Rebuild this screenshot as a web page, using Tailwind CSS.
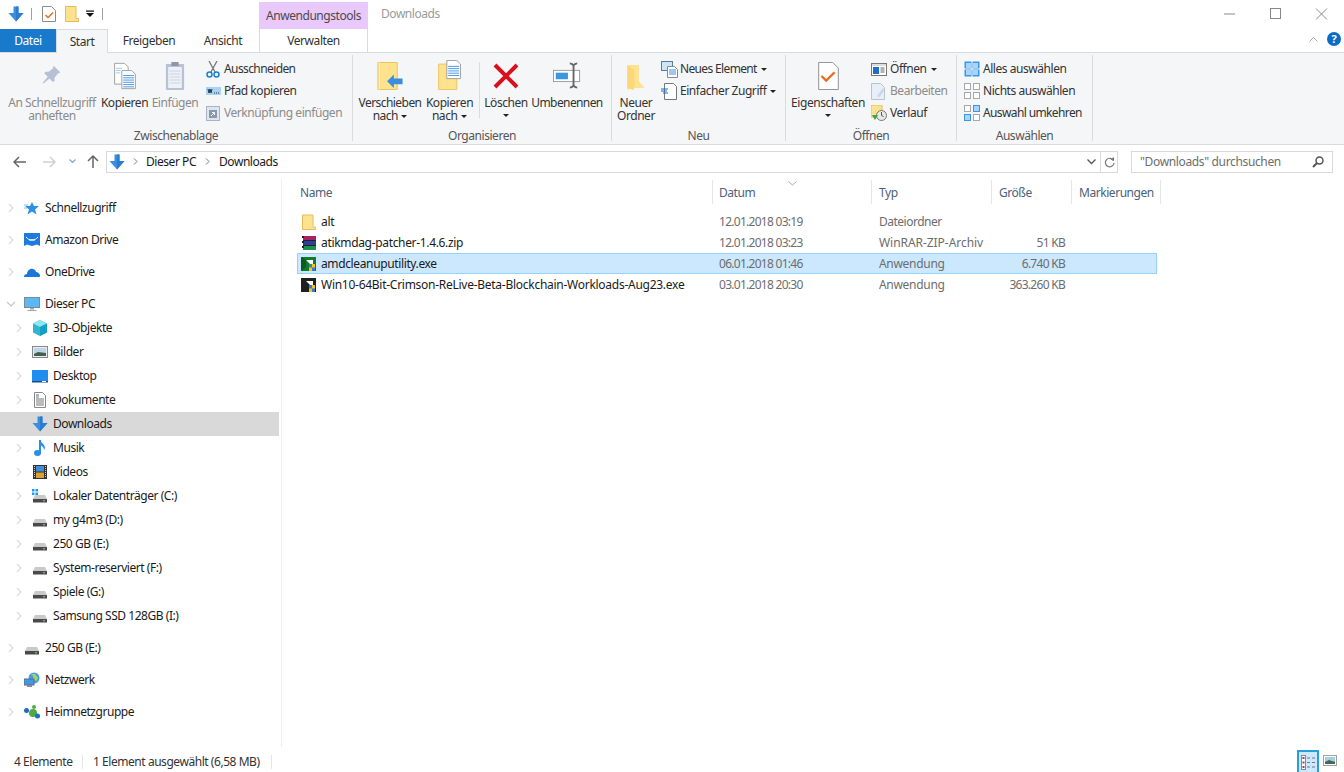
<!DOCTYPE html>
<html lang="de"><head><meta charset="utf-8"><title>Downloads</title>
<script src="https://cdn.jsdelivr.net/npm/@tailwindcss/browser@4"></script></head>
<body class="bg-white overflow-hidden">
<svg width="0" height="0" class="absolute">
<defs>
<symbol id="dl" viewBox="0 0 16 16"><path d="M5.500 0.500h5V7h5L8 15.500 0.500 7h5z" fill="#3a8ee0"/><path d="M8 0.500h2.500V7h5L8 15.500z" fill="#2b7bd0"/></symbol>
<symbol id="chev" viewBox="0 0 8 10"><path d="M2 1l4 4-4 4" fill="none" stroke="#dcdcdc" stroke-width="1.200"/></symbol>
<symbol id="drive" viewBox="0 0 16 16"><path d="M3 7h10l2 4H1z" fill="#c9c9c9"/><rect x="1" y="11" width="14" height="3.500" fill="#4a4a4a"/><rect x="11" y="12.300" width="2" height="1" fill="#5fe05f"/></symbol>
<symbol id="folder" viewBox="0 0 16 16"><path d="M1.500 1h10.500v12h2.500v2.500H1.500z" fill="#ffe28e" stroke="#e3bd5a"/></symbol>
</defs>
</svg>
<div class="flex flex-col h-[772px] w-[1344px] overflow-hidden text-[12px] leading-4 text-[#1a1a1a] font-['Noto_Sans','Liberation_Sans',sans-serif] tracking-[-0.45px]">

<!-- title bar -->
<div class="flex h-[29px] items-start relative">
  <div class="flex items-center h-[27px] pl-[8px]">
    <svg class="w-[16px] h-[16px]"><use href="#dl"/></svg>
    <div class="w-px h-[12px] bg-[#a0a0a0] ml-[7px]"></div>
    <svg class="w-[14px] h-[16px] ml-[10px]" viewBox="0 0 14 16"><path d="M.5.500h9l4 4v11H.5z" fill="#fff" stroke="#8a8a8a"/><path d="M3.500 9l2.500 2.500 5-5" fill="none" stroke="#ee6a1f" stroke-width="1.500"/></svg>
    <svg class="w-[14px] h-[16px] ml-[9px]" viewBox="0 0 14 16"><path d="M.5.500h10.500v12h2.500v3H.5z" fill="#ffe28e" stroke="#e3bd5a"/></svg>
    <svg class="w-[8px] h-[8px] ml-[7px]" viewBox="0 0 8 8"><path d="M0 .5h8v1.200H0zM0 3h8L4 7z" fill="#111"/></svg>
    <div class="w-px h-[12px] bg-[#a0a0a0] ml-[8px]"></div>
  </div>
  <div class="ml-[156px] mt-[2px] w-[109px] h-[27px] bg-[#e9c9fb] text-center leading-[28px] text-[#4a4a4a]">Anwendungstools</div>
  <div class="ml-[13px] mt-[6px] text-[#9a9a9a]">Downloads</div>
  <div class="ml-auto flex items-center h-[27px]">
    <svg class="w-[46px] h-[12px]" viewBox="0 0 46 12"><path d="M18 6h11" stroke="#888"/></svg>
    <svg class="w-[46px] h-[12px]" viewBox="0 0 46 12"><rect x="18.500" y=".5" width="10" height="10" fill="none" stroke="#888"/></svg>
    <svg class="w-[46px] h-[12px]" viewBox="0 0 46 12"><path d="M18 .5l11 11M29 .5l-11 11" stroke="#888"/></svg>
  </div>
</div>

<!-- tabs -->
<div class="flex h-[24px] relative">
  <div class="w-[56px] h-[23px] bg-[#1979ca] text-white text-center leading-[24px]">Datei</div>
  <div class="w-[52px] h-[24px] bg-[#f5f6f7] border-x border-t border-[#dadbdc] text-center leading-[24px] z-10 text-[#333]">Start</div>
  <div class="w-[66px] text-center leading-[24px] h-[23px] text-[#333] ml-[8px]">Freigeben</div>
  <div class="w-[56px] text-center leading-[24px] h-[23px] text-[#333] ml-[13px]">Ansicht</div>
  <div class="ml-[8px] w-[109px] h-[23px] text-center leading-[24px] border-x border-[#dadbdc] text-[#333]">Verwalten</div>
  <div class="ml-auto flex items-center gap-[9px] pr-[3px] pb-[5px]">
    <svg class="w-[9px] h-[6px]" viewBox="0 0 9 6"><path d="M.5 5.500l4-4 4 4" fill="none" stroke="#a6a6a6"/></svg>
    <div class="w-[14px] h-[14px] rounded-full bg-[#0c6cc4] text-white text-center text-[11px] leading-[14px] font-bold">?</div>
  </div>
</div>

<!-- ribbon -->
<div class="flex bg-[#f5f6f7] border-y border-[#dadbdc] -mt-px pt-[2px] box-content h-[89px] text-[#333]">
  <!-- Zwischenablage -->
  <div class="w-[353px] flex flex-col border-r border-[#dadbdc] mb-[3px]">
    <div class="flex flex-1 items-start">
      <div class="w-[96px] ml-[4px] flex flex-col items-center text-[#8b8b8b] text-center">
        <svg class="w-[22px] h-[22px] mt-[10px] mb-[9px]" viewBox="0 3 26 26"><path d="M15 4l8 8-3 1-4 5 0 4-2 1-4-4-7 6-1-1 6-7-4-4 1-2 4 0 5-4z" fill="#b6c2d4"/></svg>
        <div class="leading-[13px]">An Schnellzugriff<br>anheften</div>
      </div>
      <div class="w-[47px] ml-px flex flex-col items-center">
        <svg class="w-[24px] h-[28px] mt-[7px] mb-[6px]" viewBox="0 0 26 31"><path d="M1.500 1.500h11l4 4v19h-15z" fill="#fff" stroke="#999"/><path d="M9.500 9.500h11l4 4v16h-15z" fill="#fff" stroke="#999"/><path d="M11 15h12M11 17.500h12M11 20h12M11 22.500h12M11 25h12M11 27.500h12" stroke="#3b8fe3"/><path d="M3 7h7M3 9.500h5M3 12h5" stroke="#9cc5ee"/></svg>
        <div class="leading-[13px]">Kopieren</div>
      </div>
      <div class="w-[48px] ml-[3px] flex flex-col items-center text-[#8b8b8b]">
        <svg class="w-[20px] h-[30px] mt-[6px] mb-[5px]" viewBox="0 0 22 30" preserveAspectRatio="none"><rect x="1" y="3" width="20" height="26" rx="1" fill="#b7c2d3"/><rect x="3.500" y="6" width="15" height="21" fill="#eef2f8"/><path d="M5 10h12M5 13h12M5 16h12M5 19h12M5 22h12" stroke="#c9d3e2"/><rect x="7" y="1" width="8" height="4" fill="#8d97a8"/></svg>
        <div class="leading-[13px]">Einfügen</div>
      </div>
      <div class="ml-[7px] flex flex-col">
        <div class="flex items-center h-[22px] mt-[3px] tracking-[-0.6px]"><svg class="w-[14px] h-[17px] mr-[4px]" viewBox="0 0 14 17"><path d="M3 0l6 11M11 0L5 11" stroke="#777" stroke-width="1.300"/><circle cx="3.500" cy="13.500" r="2.500" fill="none" stroke="#1f7fd0" stroke-width="1.500"/><circle cx="10.500" cy="13.500" r="2.500" fill="none" stroke="#1f7fd0" stroke-width="1.500"/></svg>Ausschneiden</div>
        <div class="flex items-center h-[22px]"><svg class="w-[15px] h-[8px] mr-[3px]" viewBox="0 0 15 8"><rect width="15" height="8" fill="#a9d3f5"/><path d="M2 2l1 4 1-4 1 4 1-4M8 6h1M10 6h1M12 6h1" stroke="#234" fill="none"/></svg>Pfad kopieren</div>
        <div class="flex items-center h-[22px] text-[#8b8b8b]"><svg class="w-[14px] h-[16px] mr-[4px]" viewBox="0 0 14 16"><rect x=".5" y="1.500" width="13" height="14" fill="#dfe5ee" stroke="#a8b3c4"/><rect x="3" y="5" width="8" height="8" fill="#8898b0"/><path d="M5 11l3-3M6 7.500h2.500V10" stroke="#fff" fill="none"/></svg>Verknüpfung einfügen</div>
      </div>
    </div>
    <div class="h-[16px] text-center text-[#555] leading-[22px]">Zwischenablage</div>
  </div>
  <!-- Organisieren -->
  <div class="w-[259px] flex flex-col border-r border-[#dadbdc] mb-[3px]">
    <div class="flex flex-1 items-start">
      <div class="w-[68px] ml-[3px] flex flex-col items-center text-center tracking-[-0.55px]">
        <svg class="w-[26px] h-[28px] mt-[7px] mb-[6px]" viewBox="0 0 26 29"><path d="M.5.500h20v28H.5z" fill="#ffe28e" stroke="#eac25a"/><path d="M2 .5v28" stroke="#fff3c8"/><path d="M10 20l7-7v4h9v6h-9v4z" fill="#3a8ee0"/></svg>
        <div class="leading-[13px]">Verschieben<br>nach <span class="inline-block align-middle w-0 h-0 border-x-[3px] border-x-transparent border-t-[3px] border-t-[#222] ml-px"></span></div>
      </div>
      <div class="w-[47px] ml-[2px] flex flex-col items-center text-center">
        <svg class="w-[26px] h-[30px] mt-[5px] mb-[6px]" viewBox="0 0 26 33"><path d="M.5 4.500h20v28H.5z" fill="#ffe28e" stroke="#eac25a"/><path d="M9.500.5h11l4 4v16h-15z" fill="#fff" stroke="#999"/><path d="M11 7h12M11 9.500h12M11 12h12M11 14.500h12M11 17h12" stroke="#3b8fe3"/></svg>
        <div class="leading-[13px]">Kopieren<br>nach <span class="inline-block align-middle w-0 h-0 border-x-[3px] border-x-transparent border-t-[3px] border-t-[#222] ml-px"></span></div>
      </div>
      <div class="w-px h-[56px] bg-[#dadbdc] ml-[6px] mt-[7px]"></div>
      <div class="w-[48px] ml-[2px] flex flex-col items-center">
        <svg class="w-[26px] h-[26px] mt-[8px] mb-[7px]" viewBox="0 0 26 26"><path d="M2 2l22 22M24 2L2 24" stroke="#d90f1d" stroke-width="4"/></svg>
        <div class="leading-[13px]">Löschen</div>
        <span class="block w-0 h-0 border-x-[3px] border-x-transparent border-t-[3px] border-t-[#222] mt-[5px]"></span>
      </div>
      <div class="w-[72px] ml-[1px] flex flex-col items-center tracking-[-0.6px]">
        <svg class="w-[28px] h-[27px] mt-[7px] mb-[7px]" viewBox="0 0 30 28"><rect x=".5" y="8.500" width="28" height="12" fill="#fff" stroke="#999"/><rect x="3" y="11" width="13" height="7" fill="#3a97e6"/><path d="M18 1c2 0 3 1 4 2 1-1 2-2 4-2M22 3v22M18 27c2 0 3-1 4-2 1 1 2 2 4 2" fill="none" stroke="#666" stroke-width="2"/></svg>
        <div class="leading-[13px]">Umbenennen</div>
      </div>
    </div>
    <div class="h-[16px] text-center text-[#555] leading-[22px]">Organisieren</div>
  </div>
  <!-- Neu -->
  <div class="w-[174px] flex flex-col border-r border-[#dadbdc] mb-[3px]">
    <div class="flex flex-1 items-start">
      <div class="w-[48px] flex flex-col items-center text-center">
        <svg class="w-[20px] h-[27px] mt-[9px] mb-[5px]" viewBox="0 0 20 28"><path d="M1 1h12v17l6 7H8l-7 2z" fill="#ffe28e"/><path d="M1 1l7 5v21l-7-2z" fill="#fbd777"/></svg>
        <div class="leading-[13px]">Neuer<br>Ordner</div>
      </div>
      <div class="ml-px flex flex-col">
        <div class="flex items-center h-[22px] mt-[3px] tracking-[-0.65px]"><svg class="w-[17px] h-[17px] mr-[2px]" viewBox="0 0 17 17"><rect x=".5" y=".5" width="11" height="9" fill="#cfe4f7" stroke="#5a7a9a"/><path d="M6.500 5.500h7l3 3v8h-10z" fill="#fff" stroke="#888"/><path d="M8 9h7M8 11h7M8 13h7" stroke="#3b8fe3"/></svg>Neues Element <span class="inline-block w-0 h-0 border-x-[3px] border-x-transparent border-t-[3px] border-t-[#222] ml-[4px]"></span></div>
        <div class="flex items-center h-[22px]"><svg class="w-[16px] h-[17px] mr-[3px]" viewBox="0 0 16 17"><path d="M3.500.5h9l3 3v13h-12z" fill="#fff" stroke="#777"/><path d="M0 6h7M0 8h6M2 10h5" stroke="#1f6fb8"/></svg>Einfacher Zugriff <span class="inline-block w-0 h-0 border-x-[3px] border-x-transparent border-t-[3px] border-t-[#222] ml-[4px]"></span></div>
      </div>
    </div>
    <div class="h-[16px] text-center text-[#555] leading-[22px]">Neu</div>
  </div>
  <!-- Öffnen -->
  <div class="w-[171px] flex flex-col border-r border-[#dadbdc] mb-[3px]">
    <div class="flex flex-1 items-start">
      <div class="w-[78px] ml-[3px] flex flex-col items-center">
        <svg class="w-[21px] h-[28px] mt-[7px] mb-[6px]" viewBox="0 0 22 30"><path d="M.5.500h15l6 6v23H.5z" fill="#fff" stroke="#8a8a8a"/><path d="M3.500 15l5 5 9-9" fill="none" stroke="#ee6a1f" stroke-width="2.500"/></svg>
        <div class="leading-[13px]">Eigenschaften</div>
        <span class="block w-0 h-0 border-x-[3px] border-x-transparent border-t-[3px] border-t-[#222] mt-[5px]"></span>
      </div>
      <div class="ml-[4px] flex flex-col">
        <div class="flex items-center h-[22px] mt-[3px]"><svg class="w-[16px] h-[13px] mr-[3px]" viewBox="0 0 16 13"><rect x=".5" y=".5" width="15" height="12" fill="#fff" stroke="#777"/><rect x="2" y="4" width="6" height="7" fill="#1f6fc8"/><path d="M9.500 5h4M9.500 7h4M9.500 9h4" stroke="#666"/><path d="M1 2h14" stroke="#bbb"/></svg>Öffnen <span class="inline-block w-0 h-0 border-x-[3px] border-x-transparent border-t-[3px] border-t-[#222] ml-[4px]"></span></div>
        <div class="flex items-center h-[22px] text-[#8b8b8b]"><svg class="w-[15px] h-[17px] mr-[4px]" viewBox="0 0 15 17"><path d="M.5.500h9l4 4v12H.5z" fill="#e9eff8" stroke="#b5c3d8"/><path d="M6 13l6-8 2 1.500-6 8z" fill="#c9d6e8"/></svg>Bearbeiten</div>
        <div class="flex items-center h-[22px]"><svg class="w-[16px] h-[16px] mr-[3px]" viewBox="0 0 16 16"><path d="M0 0h11v12H0z" fill="#ffe28e" stroke="#e3bd5a"/><circle cx="10.500" cy="10.500" r="5" fill="#e8e8e8" stroke="#777"/><path d="M10.500 7v3.500l2 1" stroke="#555" fill="none"/><path d="M1 10l3 5 3-5z" fill="#3aa845"/></svg>Verlauf</div>
      </div>
    </div>
    <div class="h-[16px] text-center text-[#555] leading-[22px]">Öffnen</div>
  </div>
  <!-- Auswählen -->
  <div class="w-[136px] flex flex-col border-r border-[#dadbdc] mb-[3px]">
    <div class="flex flex-col flex-1 pl-[7px]">
      <div class="flex items-center h-[22px] mt-[3px]"><svg class="w-[16px] h-[16px] mr-[3px]" viewBox="0 0 16 16"><rect x=".5" y=".5" width="15" height="15" fill="#3a97e6"/><path d="M8 0v16M0 8h16" stroke="#fff"/><rect x="2" y="2" width="5" height="5" fill="#a8d4f7"/><rect x="9" y="2" width="5" height="5" fill="#a8d4f7"/><rect x="2" y="9" width="5" height="5" fill="#a8d4f7"/><rect x="9" y="9" width="5" height="5" fill="#a8d4f7"/></svg>Alles auswählen</div>
      <div class="flex items-center h-[22px]"><svg class="w-[16px] h-[16px] mr-[3px]" viewBox="0 0 16 16" fill="#fff" stroke="#a8a8a8"><rect x=".5" y=".5" width="6" height="6"/><rect x="9.500" y=".5" width="6" height="6"/><rect x=".5" y="9.500" width="6" height="6"/><rect x="9.500" y="9.500" width="6" height="6"/></svg>Nichts auswählen</div>
      <div class="flex items-center h-[22px] tracking-[-0.62px]"><svg class="w-[16px] h-[16px] mr-[3px]" viewBox="0 0 16 16" stroke="#a8a8a8"><rect x=".5" y=".5" width="6" height="6" fill="#fff"/><rect x="9.500" y=".5" width="6" height="6" fill="#a8d4f7" stroke="#3a97e6"/><rect x=".5" y="9.500" width="6" height="6" fill="#a8d4f7" stroke="#3a97e6"/><rect x="9.500" y="9.500" width="6" height="6" fill="#fff"/></svg>Auswahl umkehren</div>
    </div>
    <div class="h-[16px] text-center text-[#555] leading-[22px]">Auswählen</div>
  </div>
</div>

<!-- address row -->
<div class="flex items-center h-[35px] mt-[-1px] shrink-0">
  <svg class="w-[13px] h-[12px] ml-[13px]" viewBox="0 0 13 12"><path d="M6 1L1 6l5 5M1 6h12" fill="none" stroke="#666" stroke-width="1.500"/></svg>
  <svg class="w-[13px] h-[12px] ml-[17px]" viewBox="0 0 13 12"><path d="M7 1l5 5-5 5M12 6H0" fill="none" stroke="#d0d0d0" stroke-width="1.500"/></svg>
  <svg class="w-[7px] h-[5px] ml-[13px]" viewBox="0 0 7 5"><path d="M.5.500l3 3 3-3" fill="none" stroke="#7aa3cc" stroke-width="1.200"/></svg>
  <svg class="w-[12px] h-[13px] ml-[11px]" viewBox="0 0 12 13"><path d="M1 6l5-5 5 5M6 1v12" fill="none" stroke="#666" stroke-width="1.500"/></svg>
  <div class="ml-[7px] w-[1012px] h-[22px] border border-[#d9d9d9] flex items-center">
    <svg class="w-[16px] h-[16px] ml-[2px]"><use href="#dl"/></svg>
    <svg class="w-[5px] h-[7px] ml-[8px]" viewBox="0 0 5 7"><path d="M1 .5l3 3-3 3" fill="none" stroke="#777"/></svg>
    <span class="ml-[8px]">Dieser PC</span>
    <svg class="w-[5px] h-[7px] ml-[9px]" viewBox="0 0 5 7"><path d="M1 .5l3 3-3 3" fill="none" stroke="#777"/></svg>
    <span class="ml-[9px]">Downloads</span>
    <svg class="w-[9px] h-[6px] ml-auto mr-[4px]" viewBox="0 0 9 6"><path d="M.5.500l4 4 4-4" fill="none" stroke="#555" stroke-width="1.300"/></svg>
    <div class="w-[17px] h-full border-l border-[#d9d9d9] flex items-center justify-center"><svg class="w-[11px] h-[12px]" viewBox="0 0 11 12"><path d="M9.500 4.500A4.300 4.300 0 1 0 10 7" fill="none" stroke="#777" stroke-width="1.200"/><path d="M6.500 3.500L10 1v4z" fill="#777"/></svg></div>
  </div>
  <div class="ml-[13px] w-[202px] h-[22px] border border-[#d9d9d9] flex items-center pl-[8px] text-[#6d6d6d] tracking-[-0.35px]">"Downloads" durchsuchen
    <svg class="w-[12px] h-[12px] ml-auto mr-[8px]" viewBox="0 0 12 12"><circle cx="7.500" cy="4.500" r="3.500" fill="none" stroke="#555" stroke-width="1.500"/><path d="M5 7l-4 4" stroke="#555" stroke-width="2"/></svg></div>
</div>

<!-- main -->
<div class="flex flex-1 min-h-0">
  <!-- nav -->
  <nav class="w-[282px] border-r border-[#efefef] mb-[3px] pt-[17px] shrink-0">
    <div class="flex items-center h-[24px] mb-[8px]"><svg class="w-[8px] h-[10px] ml-[7px]"><use href="#chev"/></svg><svg class="w-[16px] h-[16px] ml-[9px]" viewBox="0 0 16 16"><path d="M8 2l2 4 5 0-4 3.500 1.500 5L8 11.500 3.500 14.500 5 9.500 1 6h5z" fill="#2a8fe6"/><path d="M0 5h4M0 8h3" stroke="#7bbcf0"/></svg><span class="ml-[5px]">Schnellzugriff</span></div>
    <div class="flex items-center h-[24px] mb-[8px]"><svg class="w-[8px] h-[10px] ml-[7px]"><use href="#chev"/></svg><svg class="w-[16px] h-[16px] ml-[9px]" viewBox="0 0 16 16"><path d="M0 1h16v13l-3-1.500-5 1.500-5-1.500-3 1.500z" fill="#1c7ae0"/><path d="M2 5c2 2 3 3 6 3s4-1 6-3M5 8h6" stroke="#fff" fill="none"/></svg><span class="ml-[5px]">Amazon Drive</span></div>
    <div class="flex items-center h-[24px] mb-[8px]"><svg class="w-[8px] h-[10px] ml-[7px]"><use href="#chev"/></svg><svg class="w-[16px] h-[16px] ml-[9px]" viewBox="0 0 16 16"><path d="M0 13c0-2 1-3 3-3 0-3 3-6 6-5 2 .5 3 2 3 3 2 0 4 2 4 3.500 0 1-.5 1.500-1 1.500z" fill="#1a79d8"/></svg><span class="ml-[5px]">OneDrive</span></div>
    <div class="flex items-center h-[24px]"><svg class="w-[8px] h-[10px] ml-[7px]" viewBox="0 0 8 10"><path d="M0 3l4 4 4-4" fill="none" stroke="#c4c4c4" stroke-width="1.200"/></svg><svg class="w-[16px] h-[16px] ml-[9px]" viewBox="0 0 16 16"><rect x=".5" y="1.500" width="15" height="10" fill="#5cb8f2" stroke="#7a8a99"/><path d="M6 12h4v1.500H6zM3.500 14h9v1h-9z" fill="#9aa5b0"/></svg><span class="ml-[5px]">Dieser PC</span></div>

    <div class="flex items-center h-[24px]"><svg class="w-[8px] h-[10px] ml-[15px]"><use href="#chev"/></svg><svg class="w-[16px] h-[16px] ml-[9px]" viewBox="0 0 16 16"><path d="M8 0l7 3.500v9L8 16l-7-3.500v-9z" fill="#2fb6cf"/><path d="M8 0l7 3.500L8 7 1 3.500z" fill="#8ce6ee"/><path d="M8 7l7-3.500v9L8 16z" fill="#14a0c4"/></svg><span class="ml-[5px]">3D-Objekte</span></div>
    <div class="flex items-center h-[24px]"><svg class="w-[8px] h-[10px] ml-[15px]"><use href="#chev"/></svg><svg class="w-[16px] h-[16px] ml-[9px]" viewBox="0 0 16 16"><rect x=".5" y="2.500" width="15" height="11" fill="#e9eef2" stroke="#888"/><rect x="2" y="4" width="12" height="8" fill="#bcd6e8"/><path d="M2 10l4-2 8 1v3H2z" fill="#44604f"/></svg><span class="ml-[5px]">Bilder</span></div>
    <div class="flex items-center h-[24px]"><svg class="w-[8px] h-[10px] ml-[15px]"><use href="#chev"/></svg><svg class="w-[16px] h-[16px] ml-[9px]" viewBox="0 0 16 16"><rect y="2" width="16" height="12" fill="#1f8ef0"/><path d="M0 13h16v1.500H0z" fill="#15507f"/><path d="M10 13.500h4" stroke="#fff"/></svg><span class="ml-[5px]">Desktop</span></div>
    <div class="flex items-center h-[24px]"><svg class="w-[8px] h-[10px] ml-[15px]"><use href="#chev"/></svg><svg class="w-[16px] h-[16px] ml-[9px]" viewBox="0 0 16 16"><path d="M2.500.5h8l3 3v12h-11z" fill="#fff" stroke="#888"/><path d="M4 5h3M4 7h8M4 9h8M4 11h8M4 13h8" stroke="#777"/><path d="M4 3h3" stroke="#1f7fd0"/></svg><span class="ml-[5px]">Dokumente</span></div>
    <div class="flex items-center h-[24px] bg-[#d9d9d9] w-[279px]"><svg class="w-[8px] h-[10px] ml-[15px]"><use href="#chev"/></svg><svg class="w-[16px] h-[16px] ml-[9px]"><use href="#dl"/></svg><span class="ml-[5px]">Downloads</span></div>
    <div class="flex items-center h-[24px]"><svg class="w-[8px] h-[10px] ml-[15px]"><use href="#chev"/></svg><svg class="w-[16px] h-[16px] ml-[9px]" viewBox="0 0 16 16"><path d="M8 0v13" stroke="#2a8fe6" stroke-width="2"/><ellipse cx="5.500" cy="13" rx="3.500" ry="3" fill="#2a8fe6"/><path d="M8 0c1 3 5 4 5 8l-1 2c0-3-2-4-4-5z" fill="#2a8fe6"/></svg><span class="ml-[5px]">Musik</span></div>
    <div class="flex items-center h-[24px]"><svg class="w-[8px] h-[10px] ml-[15px]"><use href="#chev"/></svg><svg class="w-[16px] h-[16px] ml-[9px]" viewBox="0 0 16 16"><rect x="1" y="1" width="14" height="14" fill="#333"/><rect x="4" y="2" width="8" height="5.500" fill="#3f8fd8"/><rect x="4" y="8.500" width="8" height="5.500" fill="#d8a330"/><path d="M2.500 2v12M13.500 2v12" stroke="#ccc" stroke-dasharray="1 1"/></svg><span class="ml-[5px]">Videos</span></div>
    <div class="flex items-center h-[24px]"><svg class="w-[8px] h-[10px] ml-[15px]"><use href="#chev"/></svg><svg class="w-[16px] h-[16px] ml-[9px]" viewBox="0 0 16 16"><use href="#drive" width="16" height="16"/><path d="M0 1h2.500v2.500H0zM3.500 1H6v2.500H3.500zM0 4.500h2.500V7H0zM3.500 4.500H6V7H3.500z" fill="#1d9be8"/></svg><span class="ml-[5px]">Lokaler Datenträger (C:)</span></div>
    <div class="flex items-center h-[24px]"><svg class="w-[8px] h-[10px] ml-[15px]"><use href="#chev"/></svg><svg class="w-[16px] h-[16px] ml-[9px]"><use href="#drive"/></svg><span class="ml-[5px]">my g4m3 (D:)</span></div>
    <div class="flex items-center h-[24px]"><svg class="w-[8px] h-[10px] ml-[15px]"><use href="#chev"/></svg><svg class="w-[16px] h-[16px] ml-[9px]"><use href="#drive"/></svg><span class="ml-[5px]">250 GB (E:)</span></div>
    <div class="flex items-center h-[24px]"><svg class="w-[8px] h-[10px] ml-[15px]"><use href="#chev"/></svg><svg class="w-[16px] h-[16px] ml-[9px]"><use href="#drive"/></svg><span class="ml-[5px]">System-reserviert (F:)</span></div>
    <div class="flex items-center h-[24px]"><svg class="w-[8px] h-[10px] ml-[15px]"><use href="#chev"/></svg><svg class="w-[16px] h-[16px] ml-[9px]"><use href="#drive"/></svg><span class="ml-[5px]">Spiele (G:)</span></div>
    <div class="flex items-center h-[24px] mb-[8px]"><svg class="w-[8px] h-[10px] ml-[15px]"><use href="#chev"/></svg><svg class="w-[16px] h-[16px] ml-[9px]"><use href="#drive"/></svg><span class="ml-[5px]">Samsung SSD 128GB (I:)</span></div>
    <div class="flex items-center h-[24px] mb-[8px]"><svg class="w-[8px] h-[10px] ml-[7px]"><use href="#chev"/></svg><svg class="w-[16px] h-[16px] ml-[9px]"><use href="#drive"/></svg><span class="ml-[5px]">250 GB (E:)</span></div>
    <div class="flex items-center h-[24px] mb-[8px]"><svg class="w-[8px] h-[10px] ml-[7px]"><use href="#chev"/></svg><svg class="w-[16px] h-[16px] ml-[9px]" viewBox="0 0 16 16"><circle cx="10" cy="6" r="5.500" fill="#4a9fd8"/><path d="M7 2c2 1 3 3 2 5l3 2 2-3-3-4z" fill="#a4d46e"/><rect y="7" width="10" height="6" fill="#3d9be0" stroke="#668"/><path d="M3 14h5" stroke="#889" stroke-width="2"/></svg><span class="ml-[5px]">Netzwerk</span></div>
    <div class="flex items-center h-[24px]"><svg class="w-[8px] h-[10px] ml-[7px]"><use href="#chev"/></svg><svg class="w-[16px] h-[16px] ml-[9px]" viewBox="0 0 16 16"><circle cx="2.500" cy="6.500" r="2.500" fill="#1a6fc0"/><circle cx="9" cy="9" r="4" fill="#52a845"/><circle cx="10" cy="3" r="2" fill="#52a845"/><circle cx="13.500" cy="12" r="2.500" fill="#1a6fc0"/></svg><span class="ml-[5px]">Heimnetzgruppe</span></div>
  </nav>

  <!-- files -->
  <main class="flex-1 min-w-0 pl-[15px] relative">
    <div class="flex h-[25px] text-[#4c607a] w-[864px] pt-[1px]">
      <div class="w-[416px] border-r border-[#e5e5e5] pl-[3px] pt-[5px]">Name</div>
      <div class="w-[159px] border-r border-[#e5e5e5] pl-[6px] pt-[5px] relative">Datum<svg class="absolute left-[75px] top-[1px] w-[9px] h-[5px]" viewBox="0 0 9 5"><path d="M.5.500l4 3.500 4-3.500" fill="none" stroke="#a8a8a8"/></svg></div>
      <div class="w-[120px] border-r border-[#e5e5e5] pl-[7px] pt-[5px]">Typ</div>
      <div class="w-[80px] border-r border-[#e5e5e5] pl-[7px] pt-[5px]">Größe</div>
      <div class="w-[89px] border-r border-[#e5e5e5] pl-[7px] pt-[5px]">Markierungen</div>
    </div>
    <div class="mt-[7px] w-[860px]">
      <div class="flex items-center h-[21px] border border-transparent text-[#6d6d6d]">
        <svg class="w-[16px] h-[16px] ml-[3px] shrink-0"><use href="#folder"/></svg><span class="w-[398px] ml-[4px] text-[#1a1a1a] tracking-[-0.3px]">alt</span><span class="w-[160px] tracking-[-0.72px]">12.01.2018 03:19</span><span class="w-[110px] tracking-[-0.5px]">Dateiordner</span><span class="w-[76px] text-right"></span>
      </div>
      <div class="flex items-center h-[21px] border border-transparent text-[#6d6d6d]">
        <svg class="w-[16px] h-[16px] ml-[3px] shrink-0" viewBox="0 0 16 16"><rect x="2" y="1" width="13" height="4" fill="#a8245f"/><rect x="2" y="6" width="13" height="4" fill="#2b3f9f"/><rect x="2" y="11" width="13" height="4" fill="#1d8f4a"/><path d="M1 2h2M1 7h2M1 12h2" stroke="#222" stroke-width="2"/><path d="M2 5.500h13M2 10.500h13" stroke="#222"/></svg><span class="w-[398px] ml-[4px] text-[#1a1a1a] tracking-[-0.33px]">atikmdag-patcher-1.4.6.zip</span><span class="w-[160px] tracking-[-0.72px]">12.01.2018 03:23</span><span class="w-[110px] tracking-[-0.05px]">WinRAR-ZIP-Archiv</span><span class="w-[76px] text-right tracking-[-0.72px]">51 KB</span>
      </div>
      <div class="flex items-center h-[21px] border border-[#99d1ff] bg-[#cce8ff] text-[#6d6d6d]">
        <svg class="w-[16px] h-[16px] ml-[3px] shrink-0" viewBox="0 0 16 16"><path d="M0 1h15v14H0z" fill="#0e7c2a"/><path d="M5 4h7v7z" fill="#fff"/><path d="M0 1l5 3v7l-5 4z" fill="#0a5c1f"/><rect x="8" y="8" width="6" height="7" fill="#3a78c8"/><path d="M11 8h3v3.500h-3z" fill="#f4c21c"/><path d="M8 11.500h3V15H8z" fill="#f4c21c"/></svg><span class="w-[398px] ml-[4px] text-[#1a1a1a] tracking-[-0.37px]">amdcleanuputility.exe</span><span class="w-[160px] tracking-[-0.72px]">06.01.2018 01:46</span><span class="w-[110px] tracking-[-0.3px]">Anwendung</span><span class="w-[76px] text-right tracking-[-0.72px]">6.740 KB</span>
      </div>
      <div class="flex items-center h-[21px] border border-transparent text-[#6d6d6d]">
        <svg class="w-[16px] h-[16px] ml-[3px] shrink-0" viewBox="0 0 16 16"><path d="M0 1h15v14H0z" fill="#1f1f1f"/><path d="M5 4h7v7z" fill="#fff"/><rect x="8" y="8" width="6" height="7" fill="#3a78c8"/><path d="M11 8h3v3.500h-3z" fill="#f4c21c"/><path d="M8 11.500h3V15H8z" fill="#f4c21c"/></svg><span class="w-[398px] ml-[4px] text-[#1a1a1a] tracking-[-0.27px]">Win10-64Bit-Crimson-ReLive-Beta-Blockchain-Workloads-Aug23.exe</span><span class="w-[160px] tracking-[-0.72px]">03.01.2018 20:30</span><span class="w-[110px] tracking-[-0.3px]">Anwendung</span><span class="w-[76px] text-right tracking-[-0.72px]">363.260 KB</span>
      </div>
    </div>
  </main>
</div>

<!-- status -->
<div class="flex items-center h-[22px] shrink-0 text-[#333] pt-[1px]">
  <span class="ml-[14px] w-[68px]">4 Elemente</span>
  <span class="w-px h-[14px] bg-[#e5e5e5]"></span>
  <span class="ml-[10px] w-[178px]">1 Element ausgewählt (6,58 MB)</span>
  <span class="w-px h-[14px] bg-[#e5e5e5]"></span>
  <div class="ml-auto flex items-end h-full">
    <div class="w-[22px] h-[22px] bg-[#cce8ff] border-2 border-b-0 border-[#26a0da] flex items-start pl-[2px] pt-[3px]"><svg class="w-[15px] h-[15px]" viewBox="0 0 15 15"><rect x=".5" y=".5" width="4" height="14" fill="#fff" stroke="#888"/><rect x="1.500" y="2" width="2" height="2" fill="#944"/><rect x="1.500" y="6.500" width="2" height="2" fill="#944"/><rect x="1.500" y="11" width="2" height="2" fill="#944"/><path d="M6 3h3M11 3h3M6 7.500h3M11 7.500h3M6 12h3M11 12h3" stroke="#777"/></svg></div>
    <svg class="w-[14px] h-[11px] ml-[4px] mr-[7px] mb-[6px]" viewBox="0 0 14 11"><rect x=".5" y=".5" width="13" height="10" fill="#fff" stroke="#a0a0a0"/><rect x="2" y="2" width="10" height="7" fill="#a5cfe0"/><path d="M2 7l4-2 6 2v2H2z" fill="#3d6a50"/></svg>
  </div>
</div>
</div>
</body></html>
